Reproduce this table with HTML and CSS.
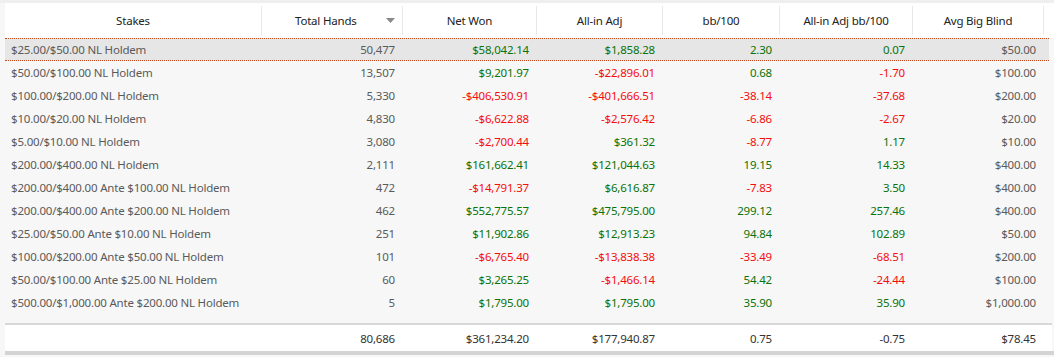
FILE: index.html
```html
<!DOCTYPE html>
<html>
<head>
<meta charset="utf-8">
<link rel="stylesheet" href="styles.css">
</head>
<body>
<div class="panel">
  <div class="grid head">
    <div class="th">Stakes</div>
    <div class="th sorted"><span class="lbl">Total Hands</span><svg class="arrow" width="9" height="5" viewBox="0 0 9 5"><path d="M0 0H9L4.5 5Z" fill="#888"/></svg></div>
    <div class="th">Net Won</div>
    <div class="th">All-in Adj</div>
    <div class="th">bb/100</div>
    <div class="th">All-in Adj bb/100</div>
    <div class="th">Avg Big Blind</div>
  </div>
  <div class="body">
    <div class="grid row selected">
      <div class="td l">$25.00/$50.00 NL Holdem</div><div class="td">50,477</div><div class="td pos">$58,042.14</div><div class="td pos">$1,858.28</div><div class="td pos">2.30</div><div class="td pos">0.07</div><div class="td">$50.00</div>
    </div>
    <div class="grid row">
      <div class="td l">$50.00/$100.00 NL Holdem</div><div class="td">13,507</div><div class="td pos">$9,201.97</div><div class="td neg">-$22,896.01</div><div class="td pos">0.68</div><div class="td neg">-1.70</div><div class="td">$100.00</div>
    </div>
    <div class="grid row">
      <div class="td l">$100.00/$200.00 NL Holdem</div><div class="td">5,330</div><div class="td neg">-$406,530.91</div><div class="td neg">-$401,666.51</div><div class="td neg">-38.14</div><div class="td neg">-37.68</div><div class="td">$200.00</div>
    </div>
    <div class="grid row">
      <div class="td l">$10.00/$20.00 NL Holdem</div><div class="td">4,830</div><div class="td neg">-$6,622.88</div><div class="td neg">-$2,576.42</div><div class="td neg">-6.86</div><div class="td neg">-2.67</div><div class="td">$20.00</div>
    </div>
    <div class="grid row">
      <div class="td l">$5.00/$10.00 NL Holdem</div><div class="td">3,080</div><div class="td neg">-$2,700.44</div><div class="td pos">$361.32</div><div class="td neg">-8.77</div><div class="td pos">1.17</div><div class="td">$10.00</div>
    </div>
    <div class="grid row">
      <div class="td l">$200.00/$400.00 NL Holdem</div><div class="td">2,111</div><div class="td pos">$161,662.41</div><div class="td pos">$121,044.63</div><div class="td pos">19.15</div><div class="td pos">14.33</div><div class="td">$400.00</div>
    </div>
    <div class="grid row">
      <div class="td l">$200.00/$400.00 Ante $100.00 NL Holdem</div><div class="td">472</div><div class="td neg">-$14,791.37</div><div class="td pos">$6,616.87</div><div class="td neg">-7.83</div><div class="td pos">3.50</div><div class="td">$400.00</div>
    </div>
    <div class="grid row">
      <div class="td l">$200.00/$400.00 Ante $200.00 NL Holdem</div><div class="td">462</div><div class="td pos">$552,775.57</div><div class="td pos">$475,795.00</div><div class="td pos">299.12</div><div class="td pos">257.46</div><div class="td">$400.00</div>
    </div>
    <div class="grid row">
      <div class="td l">$25.00/$50.00 Ante $10.00 NL Holdem</div><div class="td">251</div><div class="td pos">$11,902.86</div><div class="td pos">$12,913.23</div><div class="td pos">94.84</div><div class="td pos">102.89</div><div class="td">$50.00</div>
    </div>
    <div class="grid row">
      <div class="td l">$100.00/$200.00 Ante $50.00 NL Holdem</div><div class="td">101</div><div class="td neg">-$6,765.40</div><div class="td neg">-$13,838.38</div><div class="td neg">-33.49</div><div class="td neg">-68.51</div><div class="td">$200.00</div>
    </div>
    <div class="grid row">
      <div class="td l">$50.00/$100.00 Ante $25.00 NL Holdem</div><div class="td">60</div><div class="td pos">$3,265.25</div><div class="td neg">-$1,466.14</div><div class="td pos">54.42</div><div class="td neg">-24.44</div><div class="td">$100.00</div>
    </div>
    <div class="grid row">
      <div class="td l">$500.00/$1,000.00 Ante $200.00 NL Holdem</div><div class="td">5</div><div class="td pos">$1,795.00</div><div class="td pos">$1,795.00</div><div class="td pos">35.90</div><div class="td pos">35.90</div><div class="td">$1,000.00</div>
    </div>
  </div>
  <div class="grid foot">
    <div class="td l"></div><div class="td">80,686</div><div class="td">$361,234.20</div><div class="td">$177,940.87</div><div class="td">0.75</div><div class="td">-0.75</div><div class="td">$78.45</div>
  </div>
</div>
</body>
</html>
```
FILE: styles.css
```css
html, body {
  margin: 0;
  padding: 0;
  background: #f7f7f7;
}
body {
  font-family: "Noto Sans", "Open Sans", sans-serif;
  font-size: 11.5px;
  letter-spacing: -0.2px;
  width: 1054px;
  height: 357px;
  overflow: hidden;
}
.panel {
  display: flex;
  flex-direction: column;
  height: 357px;
  border-top: 3px solid #efefef;
  box-sizing: border-box;
}
.grid {
  display: grid;
  grid-template-columns: 257px 141px 134px 126px 117px 133px 131px;
}
.head {
  background: #ffffff;
  height: 35px;
  margin-left: 5px;
  align-items: center;
}
.th {
  display: flex;
  align-items: center;
  justify-content: center;
  height: 28px;
  border-right: 1px solid #e8e8e8;
  color: #222;
  padding-bottom: 1px;
}
.sorted {
  justify-content: flex-start;
  padding-left: 33px;
  position: relative;
}
.sorted .arrow {
  position: absolute;
  right: 7px;
  top: 12px;
}
.body {
  margin-left: 5px;
  padding-bottom: 9px;
}
.row {
  height: 23px;
  align-items: center;
  color: #5a5a5a;
  box-sizing: border-box;
}
.row.selected {
  background: #e6e6e6;
  border-top: 1px dotted #c8481c;
  border-bottom: 1px dotted #c8481c;
  margin-right: 5px;
}
.td {
  text-align: right;
  padding-right: 8px;
  white-space: nowrap;
}
.td.l {
  text-align: left;
  padding-left: 6px;
}
.pos { color: #0a730a; }
.neg { color: #f50d0d; }
.foot {
  background: #ffffff;
  border-top: 2px solid #d8d8d8;
  height: 28px;
  margin-left: 5px;
  margin-right: 2px;
  align-items: center;
  color: #333;
  padding-top: 1px;
  box-sizing: border-box;
}
.panel::after {
  content: "";
  display: block;
  height: 4px;
  background: #d4d4d4;
  margin-left: 5px;
}
```
